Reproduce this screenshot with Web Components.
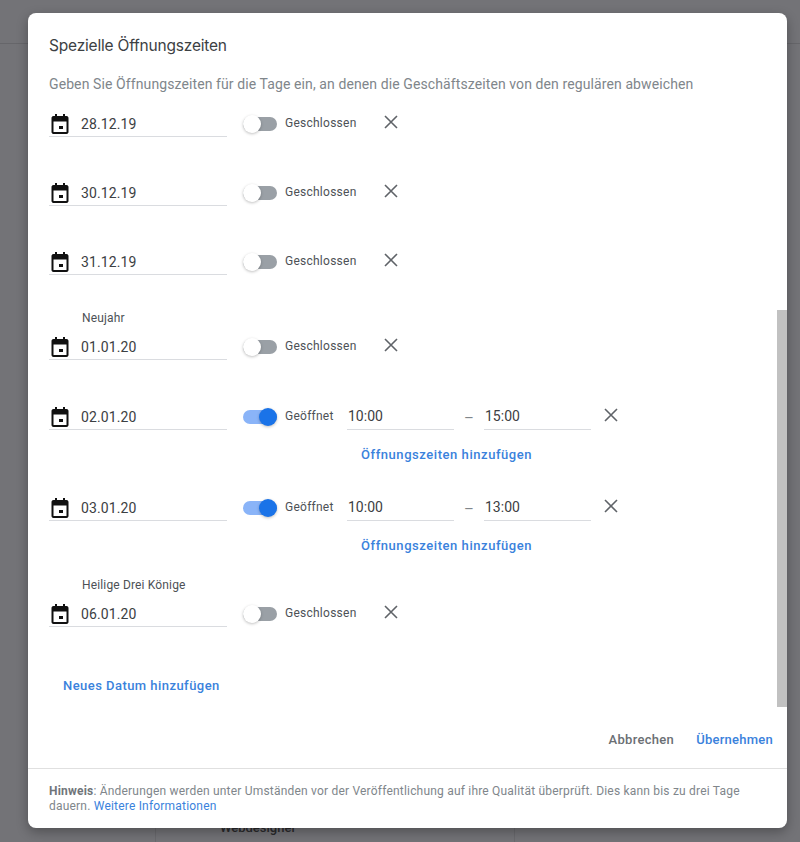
<!DOCTYPE html>
<html lang="de">
<head>
<meta charset="utf-8">
<title>Spezielle Öffnungszeiten</title>
<style>
  html, body { margin: 0; height: 842px; overflow: hidden; }
  body { background: #737377; font-family: Roboto, "Liberation Sans", sans-serif; }
</style>
</head>
<body>
<page-backdrop>
  <hours-dialog>
    <hours-row date="28.12.19"></hours-row>
    <hours-row date="30.12.19" gap="41"></hours-row>
    <hours-row date="31.12.19" gap="41"></hours-row>
    <hours-row date="01.01.20" holiday="Neujahr" gap="35"></hours-row>
    <hours-row date="02.01.20" from="10:00" to="15:00" gap="42"></hours-row>
    <hours-row date="03.01.20" from="10:00" to="13:00" gap="27"></hours-row>
    <hours-row date="06.01.20" holiday="Heilige Drei Könige" gap="20"></hours-row>
  </hours-dialog>
</page-backdrop>

<script>
const BLUE = "#1a73e8";
const LINK = "#3a82dc";

class PageBackdrop extends HTMLElement {
  constructor() {
    super();
    this.attachShadow({ mode: "open" });
    this.shadowRoot.innerHTML = `
    <style>
      :host {
        display: block;
        position: relative;
        box-sizing: border-box;
        height: 842px;
        padding: 13px 13px 14px 28px;
        overflow: hidden;
      }
      .rule {
        position: absolute;
        left: 0;
        right: 0;
        top: 43px;
        height: 1px;
        background: #66666a;
      }
      .under {
        position: absolute;
        left: 155px;
        top: 800px;
        width: 360px;
        height: 42px;
        border: solid #69696d;
        border-width: 0 1px;
        box-sizing: border-box;
        color: #2a2a2c;
        font-size: 13px;
        font-weight: 500;
        padding: 21px 0 0 64px;
        line-height: 14px;
      }
      ::slotted(*) { position: relative; }
    </style>
    <div class="rule"></div>
    <div class="under">Webdesigner</div>
    <slot></slot>
  `;
  }
}

class HoursDialog extends HTMLElement {
  constructor() {
    super();
    this.attachShadow({ mode: "open" });
    this.shadowRoot.innerHTML = `
    <style>
      :host {
        display: flex;
        flex-direction: column;
        box-sizing: border-box;
        width: 759px;
        height: 815px;
        background: #fff;
        border-radius: 8px;
        box-shadow: 0 4px 12px rgba(0, 0, 0, .3);
        overflow: hidden;
      }
      .main {
        position: relative;
        flex: 1;
        padding: 0 21px;
        min-height: 0;
      }
      h2 {
        margin: 0;
        padding-top: 22px;
        font: 400 15.5px/21px "Inter", Roboto, sans-serif;
        letter-spacing: -.2px;
        color: #3c4043;
      }
      p.lead {
        margin: 18px 0 15px;
        font-size: 14px;
        line-height: 20px;
        letter-spacing: .1px;
        color: #80868b;
      }
      .add {
        display: block;
        margin: 49px 0 0 14px;
      }
      .link {
        font: 500 13px/20px Roboto, sans-serif;
        letter-spacing: .45px;
        color: ${LINK};
      }
      .scroll {
        position: absolute;
        top: 297px;
        right: 0;
        width: 10px;
        height: 397px;
        background: #c1c1c1;
      }
      .actions {
        display: flex;
        justify-content: flex-end;
        gap: 22px;
        padding: 0 14px 18px 0;
      }
      .cancel {
        font: 500 13px/20px Roboto, sans-serif;
        letter-spacing: .3px;
        color: #6b6f74;
      }
      .actions .link { letter-spacing: .25px; }
      footer {
        border-top: 1px solid #e0e0e0;
        padding: 15px 21px 14px;
        font-size: 12px;
        line-height: 15px;
        letter-spacing: .2px;
        color: #80868b;
      }
      footer b { font-weight: 700; color: #70757a; }
      footer a { color: ${LINK}; text-decoration: none; }
    </style>
    <div class="main">
      <h2>Spezielle Öffnungszeiten</h2>
      <p class="lead">Geben Sie Öffnungszeiten für die Tage ein, an denen die Geschäftszeiten von den regulären abweichen</p>
      <slot></slot>
      <span class="add link">Neues Datum hinzufügen</span>
      <div class="scroll"></div>
    </div>
    <div class="actions">
      <span class="cancel">Abbrechen</span>
      <span class="link">Übernehmen</span>
    </div>
    <footer><b>Hinweis</b>: Änderungen werden unter Umständen vor der Veröffentlichung auf ihre Qualität überprüft. Dies kann bis zu drei Tage dauern. <a>Weitere Informationen</a></footer>
  `;
  }
}

class HoursRow extends HTMLElement {
  constructor() {
    super();
    this.attachShadow({ mode: "open" });
  }

  connectedCallback() {
    const date = this.getAttribute("date");
    const holiday = this.getAttribute("holiday");
    const from = this.getAttribute("from");
    const to = this.getAttribute("to");
    const gap = this.getAttribute("gap") || 0;
    const open = from !== null;

    const close = `<svg class="x" viewBox="0 0 14 14" width="14" height="14"><path d="M1 1l12 12M13 1L1 13" stroke="#5f6368" stroke-width="1.6" fill="none"/></svg>`;
    const times = open ? `
      <span class="time">${from}</span>
      <span class="dash">–</span>
      <span class="time">${to}</span>` : "";

    this.shadowRoot.innerHTML = `
    <style>
      :host {
        display: block;
        margin-top: ${gap}px;
      }
      .holiday {
        font-size: 12px;
        line-height: 14px;
        letter-spacing: .15px;
        color: #4d5156;
        padding-top: 1px;
        margin: 0 0 7px 33px;
      }
      .row {
        display: flex;
        align-items: center;
        height: 28px;
      }
      .date {
        box-sizing: border-box;
        display: flex;
        align-items: center;
        width: 178px;
        height: 28px;
        padding-top: 2px;
        border-bottom: 1px solid #dadce0;
        font-size: 14px;
        letter-spacing: .1px;
        color: #3c4043;
      }
      .date svg { margin: 0 10px 0 0; flex: none; }
      hours-toggle { margin: 2px 8px 0 16px; }
      .state {
        font-size: 12px;
        letter-spacing: .25px;
        color: #4d5156;
        margin-top: -1px;
        width: 62px;
      }
      .time {
        box-sizing: border-box;
        width: 107px;
        height: 28px;
        line-height: 28px;
        border-bottom: 1px solid #dadce0;
        font-size: 14px;
        color: #3c4043;
        padding-left: 1px;
      }
      .dash {
        width: 30px;
        text-align: center;
        color: #80868b;
        font-size: 15px;
        padding-top: 4px;
      }
      .x { margin: -3px 0 0 ${open ? 13 : 37}px; flex: none; }
      .more {
        margin: 14px 0 0 312px;
        font: 500 13px/22px Roboto, sans-serif;
        letter-spacing: .55px;
        color: ${LINK};
      }
    </style>
    ${holiday ? `<div class="holiday">${holiday}</div>` : ""}
    <div class="row">
      <span class="date">
        <svg viewBox="0 0 22 22" width="22" height="22"><path fill="#111" d="M6 1h2v2h6V1h2v2h1.5c1.1 0 2 .9 2 2v14c0 1.1-.9 2-2 2h-13c-1.1 0-2-.9-2-2V5c0-1.1.9-2 2-2H6V1zM4.5 8.5V19h13V8.5h-13zM10 13h4v3h-4z"/></svg>
        ${date}
      </span>
      <hours-toggle ${open ? "on" : ""}></hours-toggle>
      <span class="state">${open ? "Geöffnet" : "Geschlossen"}</span>
      ${times}
      ${close}
    </div>
    ${open ? `<div class="more">Öffnungszeiten hinzufügen</div>` : ""}
  `;
  }
}

class HoursToggle extends HTMLElement {
  constructor() {
    super();
    this.attachShadow({ mode: "open" });
  }

  connectedCallback() {
    const on = this.hasAttribute("on");
    this.shadowRoot.innerHTML = `
    <style>
      :host {
        display: block;
        position: relative;
        flex: none;
        width: 34px;
        height: 18px;
      }
      .track {
        position: absolute;
        top: 2px;
        left: 0;
        width: 34px;
        height: 14px;
        border-radius: 7px;
        background: ${on ? "#8ab4f8" : "#9aa0a6"};
      }
      .knob {
        position: absolute;
        top: 0;
        ${on ? "right: 0" : "left: 0"};
        width: 18px;
        height: 18px;
        border-radius: 50%;
        background: ${on ? BLUE : "#fff"};
        box-shadow: 0 1px 3px rgba(0, 0, 0, .25);
      }
    </style>
    <div class="track"></div>
    <div class="knob"></div>
  `;
  }
}

customElements.define("page-backdrop", PageBackdrop);
customElements.define("hours-dialog", HoursDialog);
customElements.define("hours-row", HoursRow);
customElements.define("hours-toggle", HoursToggle);
</script>
</body>
</html>
